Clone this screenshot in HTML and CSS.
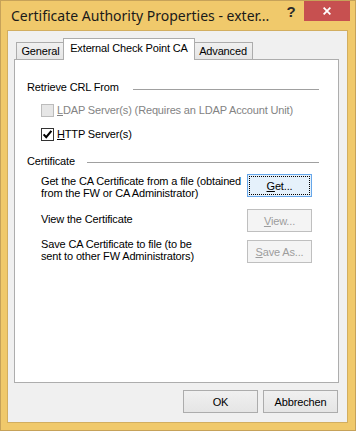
FILE: index.html
```html
<!DOCTYPE html>
<html>
<head>
<meta charset="utf-8">
<link rel="stylesheet" href="styles.css">
</head>
<body>
<div class="window">
  <div class="titlebar">
    <div class="title">Certificate Authority Properties - exter...</div>
    <div class="help">?</div>
    <div class="close"><svg width="8" height="8" viewBox="0 0 8 8"><path d="M0.6 0.6 L7.4 7.4 M7.4 0.6 L0.6 7.4" stroke="#fff" stroke-width="1.8" fill="none"/></svg></div>
  </div>
  <div class="client">
    <div class="tabs">
      <div class="tab tab-general">General</div>
      <div class="tab tab-active">External Check Point CA</div>
      <div class="tab tab-advanced">Advanced</div>
    </div>
    <div class="panel">
      <div class="group-head"><span>Retrieve CRL From</span><span class="rule rule-crl"></span></div>
      <div class="check-row row-ldap is-disabled">
        <span class="box"></span>
        <span class="label"><u>L</u>DAP Server(s) (Requires an LDAP Account Unit)</span>
      </div>
      <div class="check-row row-http">
        <span class="box is-checked"><svg width="11" height="11" viewBox="0 0 11 11"><path d="M1.6 5.4 L4.2 8.2 L9.4 1.8" stroke="#000" stroke-width="2.1" fill="none"/></svg></span>
        <span class="label"><u>H</u>TTP Server(s)</span>
      </div>
      <div class="group-head head-cert"><span>Certificate</span><span class="rule rule-cert"></span></div>
      <div class="cert-row row-get">
        <div class="desc">Get the CA Certificate from a file (obtained<br>from the FW or CA Administrator)</div>
        <div class="btn btn-small btn-default"><span class="focus"><u>G</u>et...</span></div>
      </div>
      <div class="cert-row row-view">
        <div class="desc">View the Certificate</div>
        <div class="btn btn-small btn-disabled"><span><u>V</u>iew...</span></div>
      </div>
      <div class="cert-row row-save">
        <div class="desc">Save CA Certificate to file (to be<br>sent to other FW Administrators)</div>
        <div class="btn btn-small btn-disabled"><span><u>S</u>ave As...</span></div>
      </div>
    </div>
    <div class="footer">
      <div class="btn btn-wide">OK</div>
      <div class="btn btn-wide">Abbrechen</div>
    </div>
  </div>
</div>
</body>
</html>
```

FILE: styles.css
```css
* { box-sizing: border-box; }
html, body { margin: 0; padding: 0; }
body {
  width: 356px;
  height: 431px;
  overflow: hidden;
  font-family: "Liberation Sans", Arial, sans-serif;
  font-size: 11px;
  letter-spacing: -0.15px;
  color: #000;
}
u { text-decoration: underline; text-underline-offset: 1px; }

.window {
  width: 356px;
  height: 431px;
  border: 1px solid #c6a259;
  background: #f0c96b;
  display: flex;
  flex-direction: column;
}

.titlebar {
  height: 29px;
  flex: none;
  display: flex;
  align-items: flex-start;
}
.title {
  flex: 1;
  margin-left: 10px;
  font-family: "Noto Sans", sans-serif;
  font-size: 14px;
  letter-spacing: 0;
  line-height: 29px;
  color: #1a1a1a;
  white-space: nowrap;
}
.help {
  width: 26px;
  height: 20px;
  font-family: "Liberation Sans", sans-serif;
  font-weight: bold;
  font-size: 15px;
  line-height: 21px;
  text-align: center;
  color: #2b2b2b;
}
.close {
  width: 46px;
  height: 20px;
  margin-right: 5px;
  background: #c75050;
  display: flex;
  align-items: center;
  justify-content: center;
}

.client {
  flex: 1;
  margin: 0 7px 7px 6px;
  border: 1px solid #d2ae60;
  background: #f0f0f0;
  padding: 7px 8px 0 6px;
  display: flex;
  flex-direction: column;
}

.tabs {
  height: 21px;
  padding-left: 2px;
  display: flex;
  align-items: flex-end;
}
.tab {
  height: 17px;
  border: 1px solid #acacac;
  border-bottom: none;
  background: linear-gradient(#f0f0f0, #e5e5e5);
  text-align: center;
  line-height: 16px;
  white-space: nowrap;
  flex: none;
}
.tab-general { width: 49px; }
.tab-advanced { width: 60px; }
.tab-active {
  position: relative;
  z-index: 2;
  width: 132px;
  height: 22px;
  margin: 0 -2px -1px -2px;
  background: #fff;
  line-height: 18px;
}

.panel {
  height: 324px;
  border: 1px solid #adadad;
  background: #fff;
  padding: 21px 19px 0 12px;
}

.group-head {
  height: 13px;
  line-height: 13px;
  display: flex;
  justify-content: space-between;
  align-items: flex-start;
}
.rule { border-top: 1px solid #a0a0a0; height: 0; }
.rule-crl { width: 186px; margin-top: 8px; }
.rule-cert { width: 232px; margin-top: 7px; }
.head-cert { margin-top: 14px; }

.check-row {
  height: 13px;
  margin-left: 14px;
  display: flex;
  align-items: center;
  line-height: 13px;
  white-space: nowrap;
}
.row-ldap { margin-top: 10px; }
.row-http { margin-top: 11px; }
.box {
  width: 13px;
  height: 13px;
  border: 1px solid #333;
  background: #fff;
  margin-right: 3px;
  display: flex;
  align-items: center;
  justify-content: center;
  flex: none;
}
.is-disabled .box { border-color: #bcbcbc; background: #e6e6e6; }
.is-disabled .label { color: #838383; }

.cert-row {
  margin-left: 14px;
  display: flex;
  justify-content: space-between;
  align-items: flex-start;
}
.desc { line-height: 12px; white-space: nowrap; flex: none; }
.row-get { margin-top: 6px; }
.row-get .desc { padding-top: 1px; }
.row-view { margin-top: 10px; }
.row-view .desc { padding-top: 4px; }
.row-save { margin-top: 6px; }
.row-save .btn { margin-top: 2px; }

.btn {
  height: 23px;
  border: 1px solid #acacac;
  background: linear-gradient(#f0f0f0, #e5e5e5);
  display: flex;
  align-items: center;
  justify-content: center;
  padding: 1px;
  white-space: nowrap;
  flex: none;
}
.btn-small { width: 65px; margin-right: 7px; }
.btn-default {
  border-color: #67a7ea;
  background: #e5f1fb;
}
.focus {
  align-self: stretch;
  flex: 1;
  border: 1px dotted #000;
  display: flex;
  align-items: center;
  justify-content: center;
}
.btn-disabled {
  border-color: #bfbfbf;
  background: #f4f4f4;
  color: #9d9d9d;
}

.footer {
  margin-top: 7px;
  padding-right: 1px;
  display: flex;
  justify-content: flex-end;
  gap: 5px;
}
.btn-wide { width: 75px; }
```
